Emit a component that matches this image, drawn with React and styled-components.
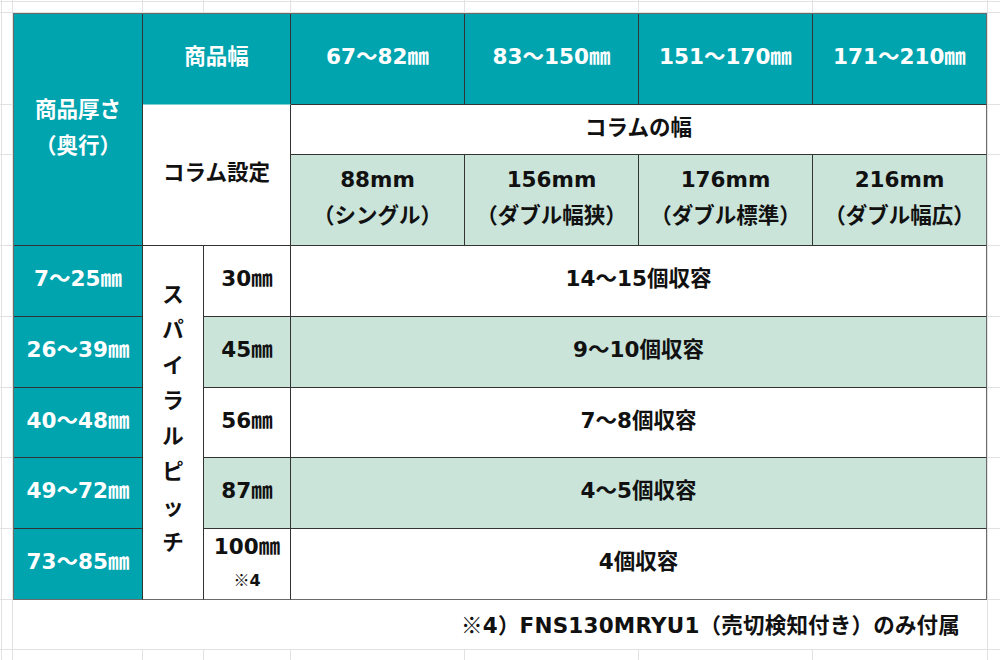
import React from 'react';
import styled, { createGlobalStyle } from 'styled-components';

const GlobalStyle = createGlobalStyle`
  html, body {
    margin: 0;
    background: #ffffff;
  }
  body {
    font-family: "DejaVu Sans", "Noto Sans CJK JP", sans-serif;
  }
`;

// spreadsheet gridlines behind the table
const vLines = [1, 12, 142, 203, 290, 464, 638, 812, 987];
const hLines = [1, 12, 104, 154, 245, 316, 387, 457, 528, 599, 649];
const gridBg = [
  ...vLines.map(
    (x) => `linear-gradient(90deg, transparent ${x}px, #e2e2e2 ${x}px, #e2e2e2 ${x + 1}px, transparent ${x + 1}px)`
  ),
  ...hLines.map(
    (y) => `linear-gradient(180deg, transparent ${y}px, #e2e2e2 ${y}px, #e2e2e2 ${y + 1}px, transparent ${y + 1}px)`
  ),
].join(',');

const TEAL = '#00a4af';
const GREEN = '#cae4da';

const Sheet = styled.div`
  width: 1000px;
  height: 660px;
  overflow: hidden;
  box-sizing: border-box;
  padding: 13px 0 0 13px;
  background-color: #ffffff;
  background-image: ${gridBg};
`;

const Table = styled.div`
  display: grid;
  width: 974px;
  box-sizing: border-box;
  grid-template-columns: 129px 61px 87px 174px 174px 174px 174px;
  grid-template-rows: 91px 50px 91px 71px 71px 70px 71px 71px;
  border-top: 1px solid #6b6b6b;
  border-left: 1px solid #6b6b6b;
`;

const Cell = styled.div`
  grid-column: ${({ $col }) => $col};
  grid-row: ${({ $row }) => $row};
  display: flex;
  flex-direction: column;
  align-items: center;
  justify-content: center;
  box-sizing: border-box;
  padding-bottom: 4px;
  border-right: 1px solid ${({ $edgeRight }) => ($edgeRight ? '#6b6b6b' : '#333333')};
  border-bottom: 1px solid
    ${({ $softBottom, $edgeBottom }) => ($softBottom ? '#7fd0d6' : $edgeBottom ? '#6b6b6b' : '#333333')};
  background: ${({ $tone }) => ($tone === 'teal' ? TEAL : $tone === 'green' ? GREEN : '#ffffff')};
  color: ${({ $tone }) => ($tone === 'teal' ? '#ffffff' : '#111111')};
  font-size: 21.5px;
  font-weight: 700;
  line-height: 36px;
  text-align: center;
  white-space: nowrap;
`;

const Vertical = styled.span`
  width: 1em;
  line-height: 35.5px;
  word-break: break-all;
  white-space: normal;
  text-align: center;
  margin-top: -4px;
`;

const Small = styled.span`
  font-size: 16px;
  line-height: 28px;
`;

const Mark = styled.span`
  font-family: "Noto Sans CJK JP", sans-serif;
`;

const Note = styled.div`
  width: 974px;
  height: 49px;
  box-sizing: border-box;
  padding: 0 27px 3px 0;
  display: flex;
  align-items: center;
  justify-content: flex-end;
  background: #ffffff;
  color: #111111;
  font-size: 21.5px;
  font-weight: 700;
  white-space: nowrap;
  letter-spacing: 0.2px;
`;

const widths = ['67～82㎜', '83～150㎜', '151～170㎜', '171～210㎜'];
const columns = [
  ['88mm', '（シングル）'],
  ['156mm', '（ダブル幅狭）'],
  ['176mm', '（ダブル標準）'],
  ['216mm', '（ダブル幅広）'],
];
const rows = [
  { depth: '7～25㎜', pitch: '30㎜', cap: '14～15個収容' },
  { depth: '26～39㎜', pitch: '45㎜', cap: '9～10個収容' },
  { depth: '40～48㎜', pitch: '56㎜', cap: '7～8個収容' },
  { depth: '49～72㎜', pitch: '87㎜', cap: '4～5個収容' },
  { depth: '73～85㎜', pitch: '100㎜', note: '4', cap: '4個収容' },
];

const App = () => {
  return (
    <>
      <GlobalStyle />
      <Sheet>
        <Table>
          {/* header */}
          <Cell $col="1" $row="1 / 4" $tone="teal">
            <span>商品厚さ</span>
            <span>（奥行）</span>
          </Cell>
          <Cell $col="2 / 4" $row="1" $tone="teal" $softBottom>
            商品幅
          </Cell>
          {widths.map((w, i) => (
            <Cell key={w} $col={`${i + 4}`} $row="1" $tone="teal" $edgeRight={i === 3}>
              {w}
            </Cell>
          ))}
          <Cell $col="2 / 4" $row="2 / 4" $tone="white">
            コラム設定
          </Cell>
          <Cell $col="4 / 8" $row="2" $tone="white" $edgeRight>
            コラムの幅
          </Cell>
          {columns.map(([size, label], i) => (
            <Cell key={size} $col={`${i + 4}`} $row="3" $tone="green" $edgeRight={i === 3}>
              <span>{size}</span>
              <span>{label}</span>
            </Cell>
          ))}

          {/* body */}
          <Cell $col="2" $row="4 / 9" $tone="white" $edgeBottom>
            <Vertical>スパイラルピッチ</Vertical>
          </Cell>
          {rows.map((r, i) => {
            const row = `${i + 4}`;
            const tone = i % 2 === 1 ? 'green' : 'white';
            const last = i === rows.length - 1;
            return (
              <React.Fragment key={r.depth}>
                <Cell $col="1" $row={row} $tone="teal" $edgeBottom={last}>
                  {r.depth}
                </Cell>
                <Cell $col="3" $row={row} $tone={tone} $edgeBottom={last}>
                  <span>{r.pitch}</span>
                  {r.note && (
                    <Small>
                      <Mark>※</Mark>
                      {r.note}
                    </Small>
                  )}
                </Cell>
                <Cell $col="4 / 8" $row={row} $tone={tone} $edgeBottom={last} $edgeRight>
                  {r.cap}
                </Cell>
              </React.Fragment>
            );
          })}
        </Table>
        <Note>
          <Mark>※</Mark>4）FNS130MRYU1（売切検知付き）のみ付属
        </Note>
      </Sheet>
    </>
  );
};

export default App;
